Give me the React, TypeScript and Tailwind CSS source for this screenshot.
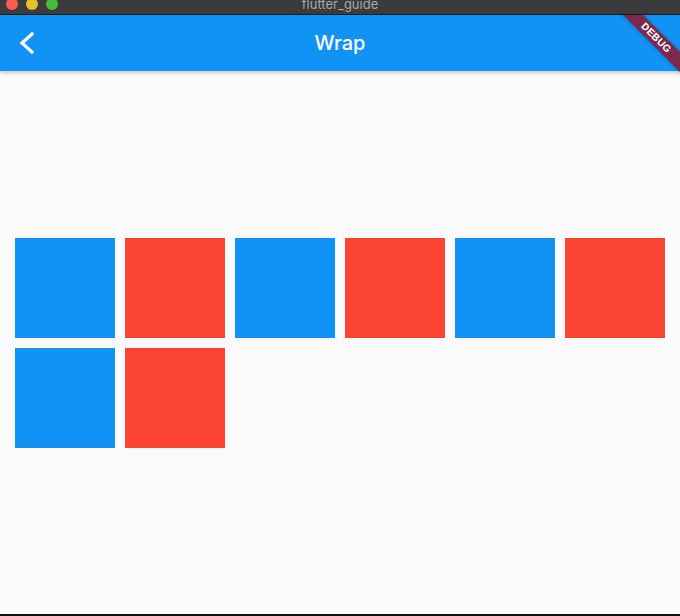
import React from 'react';

const boxes = ['blue', 'red', 'blue', 'red', 'blue', 'red', 'blue', 'red'];

const App: React.FC = () => {
  return (
    <div className="relative h-[616px] w-[680px] flex flex-col overflow-hidden bg-[#fafafa] font-['Inter','Liberation_Sans',sans-serif]">
      {/* window title bar */}
      <div className="relative h-[15px] shrink-0 bg-[#3b3b3b] border-b border-[#1c1c1c] flex items-start">
        <div className="flex gap-[8px] pl-[6px] -mt-[2px]">
          <span className="w-[12px] h-[12px] rounded-full bg-[#fd5b53]" />
          <span className="w-[12px] h-[12px] rounded-full bg-[#e6bf2a]" />
          <span className="w-[12px] h-[12px] rounded-full bg-[#47bd3a]" />
        </div>
        <div className="absolute inset-x-0 -top-[3px] text-center text-[13px] leading-[14px] text-[#a8a8a8]">flutter_guide</div>
      </div>

      {/* app bar */}
      <div className="relative z-10 h-[56px] shrink-0 bg-[#1193f5] flex items-center shadow-[0_2px_4px_rgba(0,0,0,0.2)]">
        <div className="w-[56px] h-[56px] flex items-center justify-center">
          <svg width="40" height="56" viewBox="0 0 40 56" className="-ml-[14px]">
            <polyline points="31,19 21,28 31,37" fill="none" stroke="white" strokeWidth="3.2" strokeLinecap="square" />
          </svg>
        </div>
        <div className="absolute inset-x-0 text-center text-white text-[20px] font-medium pointer-events-none">Wrap</div>
      </div>

      {/* body */}
      <div className="flex-1 flex items-center px-[15px]">
        <div className="flex flex-wrap gap-[10px] w-[650px]">
          {boxes.map((c, i) => (
            <div key={i} className={`w-[100px] h-[100px] ${c === 'blue' ? 'bg-[#1193f5]' : 'bg-[#fb4331]'}`} />
          ))}
        </div>
      </div>

      <div className="h-[2px] shrink-0 bg-[#111]" />

      {/* debug banner */}
      <div className="absolute top-[15px] right-0 w-[80px] h-[80px] overflow-hidden pointer-events-none z-20">
        <div className="absolute left-[-4px] top-[16px] w-[120px] h-[14px] rotate-45 bg-[#7c2a4b] flex items-center justify-center shadow-[0_0_4px_rgba(0,0,0,0.3)]">
          <span className="text-white text-[10px] font-extrabold tracking-[0.3px] leading-none font-['Liberation_Sans',sans-serif]">DEBUG</span>
        </div>
      </div>
    </div>
  );
};

export default App;
